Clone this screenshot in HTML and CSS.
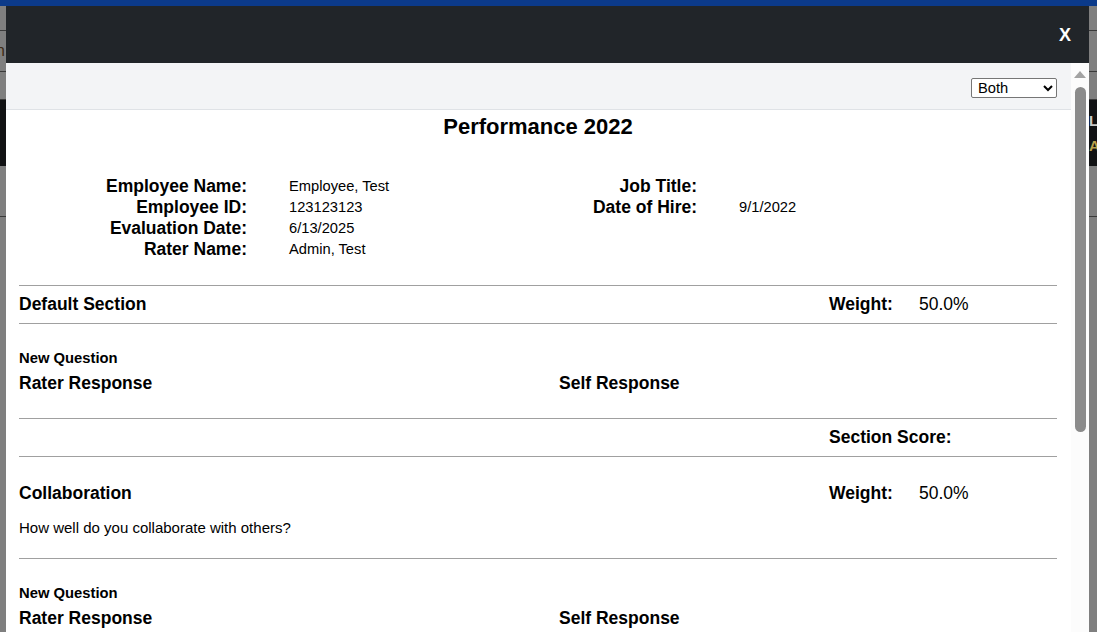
FILE: index.html
```html
<!DOCTYPE html>
<html lang="en">
<head>
<meta charset="utf-8">
<title>Performance 2022</title>
<link rel="stylesheet" href="styles.css">
</head>
<body>
<div class="page">
  <div class="page-topbar"></div>
  <div class="page-nav"></div>
  <div class="page-subnav"><span class="page-word">n</span></div>
  <div class="page-gap"></div>
  <div class="page-band"><span class="band-l">L</span><span class="band-a">A</span></div>
  <div class="page-area"></div>
</div>

<div class="modal">
  <div class="modal-header">
    <span class="close-btn">X</span>
  </div>
  <div class="modal-body">
    <div class="modal-main">
      <div class="toolbar">
        <select class="view-select">
          <option>Both</option>
          <option>Rater</option>
          <option>Self</option>
        </select>
      </div>
      <div class="content">
        <h1 class="title">Performance 2022</h1>

        <div class="info">
          <div class="info-label">Employee Name:</div>
          <div class="info-value">Employee, Test</div>
          <div class="info-label">Job Title:</div>
          <div class="info-value"></div>

          <div class="info-label">Employee ID:</div>
          <div class="info-value">123123123</div>
          <div class="info-label">Date of Hire:</div>
          <div class="info-value">9/1/2022</div>

          <div class="info-label">Evaluation Date:</div>
          <div class="info-value">6/13/2025</div>
          <div class="info-label"></div>
          <div class="info-value"></div>

          <div class="info-label">Rater Name:</div>
          <div class="info-value">Admin, Test</div>
          <div class="info-label"></div>
          <div class="info-value"></div>
        </div>

        <div class="rule rule-first"></div>
        <div class="section-head">
          <div class="section-name">Default Section</div>
          <div class="meta-label">Weight:</div>
          <div class="meta-value">50.0%</div>
        </div>
        <div class="rule"></div>

        <div class="question">
          <div class="question-name">New Question</div>
          <div class="responses">
            <div class="response-label">Rater Response</div>
            <div class="response-label">Self Response</div>
          </div>
        </div>
        <div class="rule rule-after-q"></div>

        <div class="section-head">
          <div class="section-name"></div>
          <div class="meta-label">Section Score:</div>
          <div class="meta-value"></div>
        </div>
        <div class="rule"></div>

        <div class="section-head section-head-open">
          <div class="section-name">Collaboration</div>
          <div class="meta-label">Weight:</div>
          <div class="meta-value">50.0%</div>
        </div>
        <p class="section-desc">How well do you collaborate with others?</p>
        <div class="rule rule-after-desc"></div>

        <div class="question">
          <div class="question-name">New Question</div>
          <div class="responses">
            <div class="response-label">Rater Response</div>
            <div class="response-label">Self Response</div>
          </div>
        </div>
        <div class="rule rule-after-q"></div>
      </div>
    </div>
    <div class="scrollbar">
      <div class="scroll-arrow"></div>
      <div class="scroll-thumb"></div>
    </div>
  </div>
</div>
</body>
</html>
```
FILE: styles.css
```css
html, body {
  margin: 0;
  padding: 0;
  height: 100%;
  overflow: hidden;
}

body {
  font-family: "Liberation Sans", Arial, sans-serif;
  background: #7f7f7f;
  color: #000;
}

/* background page (dimmed) */
.page-topbar {
  height: 6px;
  background: #0b3a8a;
}
.page-nav {
  height: 24px;
  border-bottom: 1px solid #3a3a3a;
}
.page-subnav {
  height: 40px;
  border-bottom: 1px solid #3a3a3a;
  display: flex;
  align-items: center;
}
.page-word {
  font-size: 16px;
  color: #3d2a14;
  margin-left: -4px;
}
.page-gap {
  height: 27px;
  border-bottom: 1px solid #3a3a3a;
}
.page-band {
  height: 66px;
  background: #111214;
  display: flex;
  flex-direction: column;
  align-items: flex-end;
  justify-content: center;
  gap: 8px;
}
.band-l {
  font-size: 15px;
  font-weight: bold;
  color: #c8c8c8;
  width: 8px;
  line-height: 17px;
}
.band-a {
  font-size: 15px;
  font-weight: bold;
  color: #b8a04a;
  width: 8px;
  line-height: 17px;
}
.page-area {
  height: 50px;
  border-bottom: 1px solid #3a3a3a;
}

/* modal */
.modal {
  position: fixed;
  left: 6px;
  top: 6px;
  width: 1083px;
  height: 626px;
  display: flex;
  flex-direction: column;
  background: #fff;
  overflow: hidden;
}

.modal-header {
  height: 57px;
  flex: none;
  background: #212529;
  display: flex;
  align-items: center;
  justify-content: flex-end;
  padding-right: 18px;
}

.close-btn {
  color: #fff;
  font-weight: bold;
  font-size: 18px;
  line-height: 20px;
}

.modal-body {
  flex: 1;
  display: flex;
  min-height: 0;
}

.modal-main {
  flex: 1;
  min-width: 0;
  overflow: hidden;
}

.toolbar {
  background: #f3f4f6;
  border-bottom: 1px solid #dfe2e6;
  box-sizing: border-box;
  height: 47px;
  padding: 15px 14px 0 0;
  display: flex;
  justify-content: flex-end;
  align-items: flex-start;
}

.view-select {
  width: 86px;
  height: 20px;
  font-family: "Liberation Sans", Arial, sans-serif;
  font-size: 14.7px;
  color: #000;
  background: #fff;
  border: 1px solid #767676;
  border-radius: 2px;
  padding: 0 0 0 2px;
  margin: 0;
}

.content {
  padding: 4px 14px 0 13px;
}

.title {
  margin: 0;
  text-align: center;
  font-size: 22px;
  line-height: 26px;
  font-weight: bold;
}

.info {
  margin-top: 36px;
  display: grid;
  grid-template-columns: 228px 186px 180px 1fr;
  grid-auto-rows: 21px;
  column-gap: 42px;
  align-items: center;
}

.info-label {
  text-align: right;
  font-weight: bold;
  font-size: 17.5px;
  line-height: 21px;
}

.info-value {
  font-size: 14.7px;
  line-height: 21px;
}

.rule {
  border-top: 1px solid #a0a0a0;
}
.rule-first {
  margin-top: 25px;
}
.rule-after-q {
  margin-top: 24px;
}
.rule-after-desc {
  margin-top: 21px;
}

.section-head {
  height: 37px;
  display: grid;
  grid-template-columns: 1fr 90px 138px;
  align-items: center;
  font-size: 17.5px;
}
.section-head-open {
  height: 22px;
  margin-top: 25px;
}

.section-name {
  font-weight: bold;
}
.meta-label {
  font-weight: bold;
  white-space: nowrap;
}
.meta-value {
  font-weight: normal;
}

.section-desc {
  margin: 15px 0 0;
  font-size: 15px;
  line-height: 18px;
}

.question {
  margin-top: 25px;
}
.question-name {
  font-weight: bold;
  font-size: 14.8px;
  line-height: 18px;
}
.responses {
  margin-top: 5px;
  display: grid;
  grid-template-columns: 540px 1fr;
}
.response-label {
  font-weight: bold;
  font-size: 17.5px;
  line-height: 22px;
}

/* fake scrollbar */
.scrollbar {
  width: 18px;
  flex: none;
  background: #fcfcfc;
  display: flex;
  flex-direction: column;
  align-items: center;
}
.scroll-arrow {
  margin-top: 8px;
  width: 0;
  height: 0;
  border-left: 6px solid transparent;
  border-right: 6px solid transparent;
  border-bottom: 7px solid #a3a3a3;
}
.scroll-thumb {
  margin-top: 9px;
  width: 11px;
  height: 345px;
  background: #8b8b8b;
  border-radius: 6px;
}
```
